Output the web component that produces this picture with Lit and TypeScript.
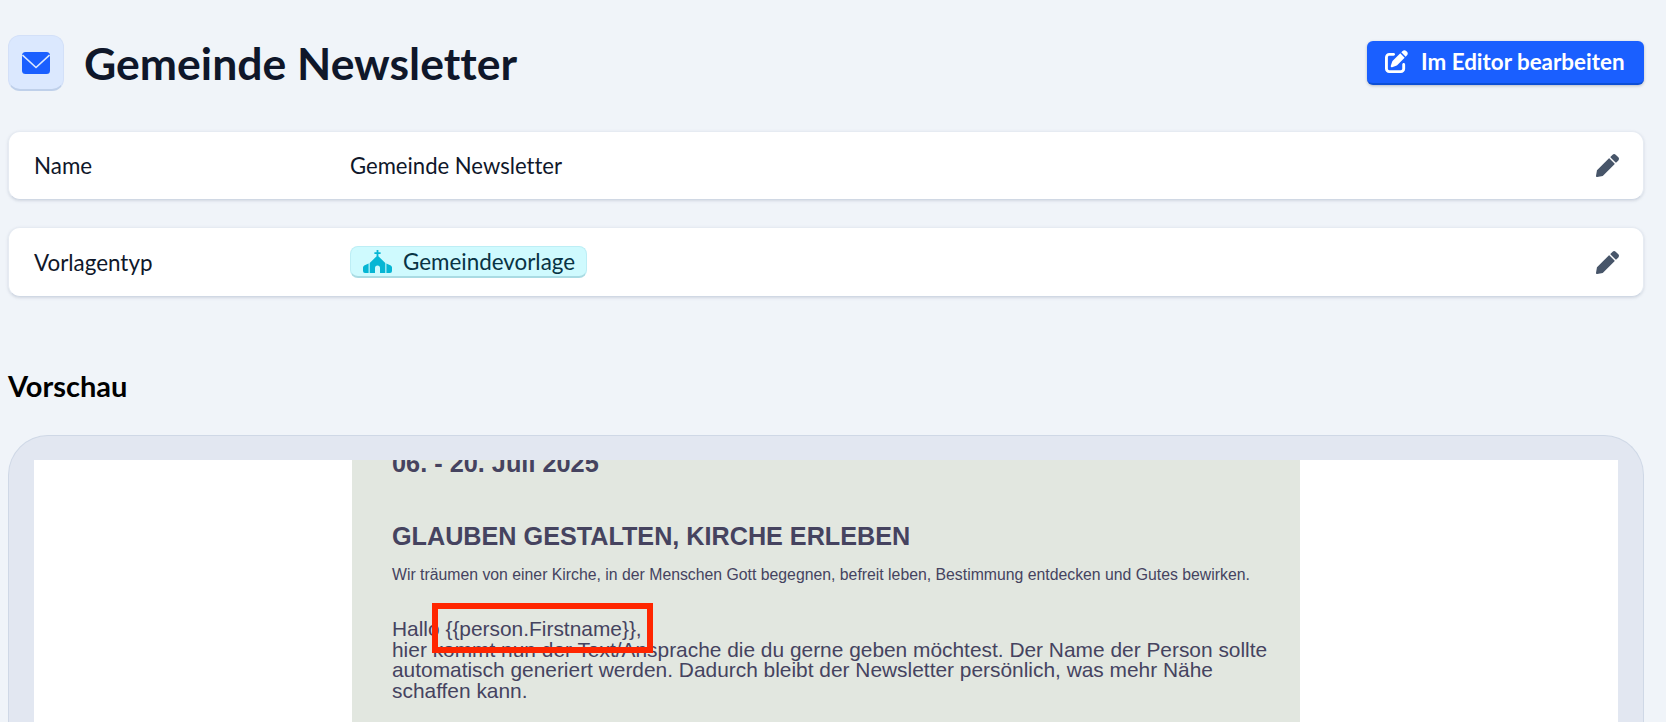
import { LitElement, html, css, svg } from "lit";
import { customElement } from "lit/decorators.js";

const pencil = svg`<path d="M497.9 142.1l-46.1 46.1c-4.7 4.7-12.3 4.7-17 0l-111-111c-4.7-4.7-4.7-12.3 0-17l46.1-46.1c18.7-18.7 49.1-18.7 67.9 0l60.1 60.1c18.8 18.7 18.8 49.1 0 67.9zM284.2 99.8L21.6 362.4.4 483.9c-2.9 16.4 11.4 30.6 27.8 27.8l121.5-21.3 262.6-262.6c4.7-4.7 4.7-12.3 0-17l-111-111c-4.8-4.7-12.4-4.7-17.1 0z"/>`;
const penSquare = svg`<path d="M471.6 21.7c-21.9-21.9-57.3-21.9-79.2 0L362.3 51.7l97.9 97.9 30.1-30.1c21.9-21.9 21.9-57.3 0-79.2L471.6 21.7zm-299.2 220c-6.1 6.1-10.8 13.6-13.5 21.9l-29.6 88.8c-2.9 8.6-.6 18.1 5.8 24.6s15.9 8.7 24.6 5.8l88.8-29.6c8.2-2.7 15.7-7.4 21.9-13.5L437.7 172.3 339.7 74.3 172.4 241.7zM96 64C43 64 0 107 0 160V416c0 53 43 96 96 96H352c53 0 96-43 96-96V320c0-17.7-14.3-32-32-32s-32 14.3-32 32v96c0 17.7-14.3 32-32 32H96c-17.7 0-32-14.3-32-32V160c0-17.7 14.3-32 32-32h96c17.7 0 32-14.3 32-32s-14.3-32-32-32H96z"/>`;

@customElement("app-root")
export class AppRoot extends LitElement {
  static styles = css`
    :host {
      display: block;
      height: 722px;
      overflow: hidden;
      background: #f0f4f9;
      font-family: Lato, "Liberation Sans", sans-serif;
      color: #0f172a;
      font-variant-ligatures: none;
    }
    .page { padding: 35px 22px 0 8px; display: flex; flex-direction: column; }
    .header { display: flex; align-items: center; justify-content: space-between; height: 56px; }
    .title-wrap { display: flex; align-items: center; gap: 20px; }
    .app-icon {
      width: 56px; height: 56px; box-sizing: border-box;
      border-radius: 12px; background: #dbe8fe; border: 1px solid #d3e0f8;
      border-bottom: 2px solid #bfd0ea;
      display: flex; align-items: center; justify-content: center;
    }
    h1 { margin: 0; font-size: 44.5px; line-height: 56px; font-weight: 700; }
    .btn {
      display: flex; align-items: center; gap: 13px;
      width: 277px; height: 44px; box-sizing: border-box; margin-top: -1px;
      padding: 0 0 0 18px; border: 0; border-bottom: 2px solid #0d4fd6;
      border-radius: 6px; background: #1a5fff; color: #fff;
      box-shadow: 0 1px 3px rgba(15, 23, 42, 0.25);
      font: 700 22.4px Lato, sans-serif;
      font-variant-ligatures: none;
    }
    .btn svg { width: 23px; height: 23px; fill: #fff; flex: none; }
    .card {
      display: flex; align-items: center; box-sizing: border-box;
      height: 69px; margin-top: 40px; padding: 0 24px 0 25px;
      background: #fff; border-radius: 12px;
      border: 1px solid #e6ebf2; border-bottom: 1px solid #d0d8e4;
      box-shadow: 0 1px 3px rgba(100, 116, 139, 0.22);
      font-size: 22.4px;
    }
    .card + .card { margin-top: 27px; height: 70px; }
    .label { width: 316px; }
    .value { flex: 1; display: flex; align-items: center; }
    .plain { font-size: 22.1px; }
    .pencil { width: 23px; height: 23px; fill: #475569; }
    .badge {
      display: flex; align-items: center; gap: 11px;
      width: 237px; height: 32px; box-sizing: border-box; padding-left: 12px;
      background: #cffafe; color: #083344; border-radius: 8px;
      border: 1px solid #bdeef5; border-bottom: 2px solid #a9dbe3;
    }
    .badge svg { width: 29px; height: 23px; fill: #06b6d4; }
    h2 { margin: 71px 0 0; font-size: 29px; line-height: 36px; font-weight: 700; color: #000; }
    .frame {
      margin-top: 31px; height: 320px; box-sizing: border-box; padding: 24px 25px 0 25px;
      background: #e2e7f1; border: 1px solid #cfd8e6; border-bottom: 0;
      border-radius: 40px 40px 0 0;
    }
    .viewport {
      position: relative; height: 100%; overflow: hidden; background: #fff;
      display: flex; justify-content: center;
    }
    .mail {
      width: 948px; flex: none; box-sizing: border-box; margin: -12px 0 0 0; padding: 0 20px 0 40px;
      background: #e2e7e0; color: #45435f;
      font-family: "Liberation Sans", Arial, sans-serif;
    }
    .date { margin: 0; font-size: 25.3px; line-height: 30px; font-weight: 700; }
    .head { margin: 43px 0 0; font-size: 25.2px; line-height: 30px; font-weight: 700; }
    .sub { margin: 14px 0 0; font-size: 15.8px; line-height: 20px; }
    .body { margin: 34px 0 0; font-size: 20.9px; line-height: 20.7px; white-space: nowrap; }
    .mark {
      position: absolute; left: 398px; top: 143px; width: 221px; height: 50px;
      box-sizing: border-box; border: 6px solid #ff2600;
    }
  `;

  render() {
    return html`
      <div class="page">
        <div class="header">
          <div class="title-wrap">
            <div class="app-icon">
              <svg width="28" height="22" viewBox="0 0 28 22">
                <rect x="0" y="0" width="28" height="22" rx="3.5" fill="#1a5fff"></rect>
                <path d="M0.5 3 L14 15.5 L27.5 3" fill="none" stroke="#dbe8fe" stroke-width="1.6"></path>
              </svg>
            </div>
            <h1>Gemeinde Newsletter</h1>
          </div>
          <button class="btn">
            <svg viewBox="0 0 512 512">${penSquare}</svg>
            <span>Im Editor bearbeiten</span>
          </button>
        </div>

        <div class="card">
          <div class="label">Name</div>
          <div class="value plain">Gemeinde Newsletter</div>
          <svg class="pencil" viewBox="0 0 512 512">${pencil}</svg>
        </div>
        <div class="card">
          <div class="label">Vorlagentyp</div>
          <div class="value">
            <span class="badge">
              <svg viewBox="0 0 29 23">
                <path d="M13.6 0h1.8v2.2h2.2v1.7h-2.2v2.4L22.3 13V23H17v-5a2.5 2.5 0 0 0-5 0v5H6.7V13l6.9-6.7v-2.4h-2.2V2.2h2.2z"></path>
                <path d="M5.6 13.5V23H2a2 2 0 0 1-2-2v-3.5c0-.8.5-1.5 1.2-2zM23.4 13.5V23H27a2 2 0 0 0 2-2v-3.5c0-.8-.5-1.5-1.2-2z"></path>
              </svg>
              <span>Gemeindevorlage</span>
            </span>
          </div>
          <svg class="pencil" viewBox="0 0 512 512">${pencil}</svg>
        </div>

        <h2>Vorschau</h2>
        <div class="frame">
          <div class="viewport">
            <div class="mail">
              <p class="date">06. - 20. Juli 2025</p>
              <p class="head">GLAUBEN GESTALTEN, KIRCHE ERLEBEN</p>
              <p class="sub">Wir träumen von einer Kirche, in der Menschen Gott begegnen, befreit leben, Bestimmung entdecken und Gutes bewirken.</p>
              <p class="body">Hallo {{person.Firstname}},<br>hier kommt nun der Text/Ansprache die du gerne geben möchtest. Der Name der Person sollte<br>automatisch generiert werden. Dadurch bleibt der Newsletter persönlich, was mehr Nähe<br>schaffen kann.</p>
            </div>
            <div class="mark"></div>
          </div>
        </div>
      </div>
    `;
  }
}
